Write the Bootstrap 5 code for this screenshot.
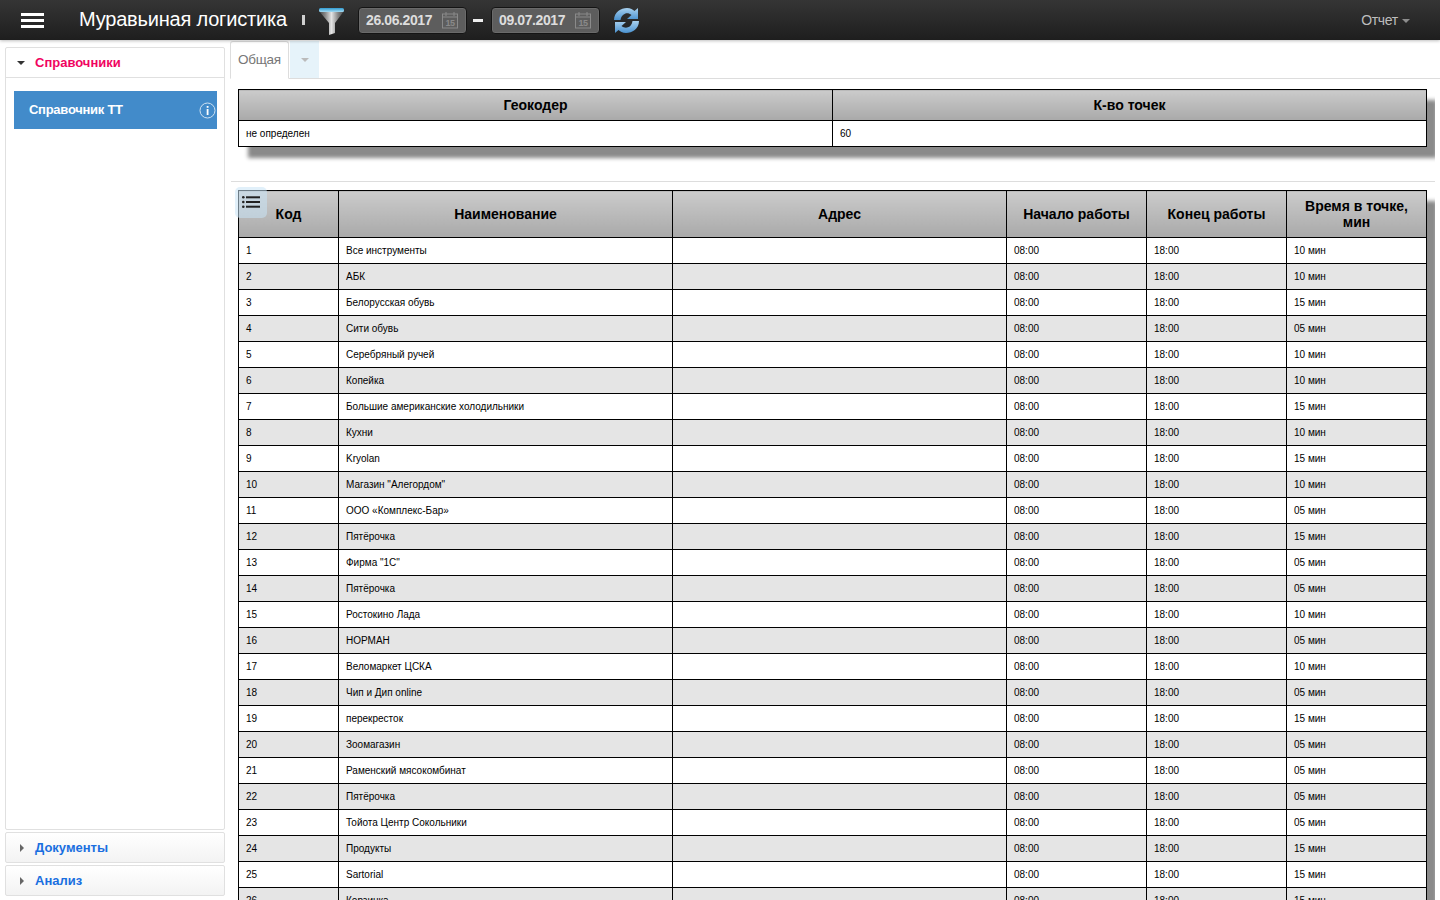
<!DOCTYPE html>
<html lang="ru">
<head>
<meta charset="utf-8">
<title>Муравьиная логистика</title>
<link rel="stylesheet" href="https://cdn.jsdelivr.net/npm/bootstrap@5.3.0/dist/css/bootstrap.min.css">
<style>
html,body{height:900px;overflow:hidden;margin:0}
body{font-family:"Liberation Sans",Arial,sans-serif;background:#fff;color:#000}
.topbar{height:40px;background:linear-gradient(#353535,#1e1e1e);color:#fff;box-shadow:0 1px 3px rgba(0,0,0,.25);position:relative;z-index:2}
.burger{width:23px;margin-left:21px;margin-right:35px;display:flex;flex-direction:column;gap:3px}
.burger i{display:block;height:3px;background:#fff}
.brand-name{font-size:20px;letter-spacing:-.2px;width:223px;white-space:nowrap;margin-top:-3px}
.tick{width:3px;height:10px;background:#d0d0d0;margin-right:13px}
.funnel{margin-right:13px;margin-top:1px}
.datebox{height:27px;width:109px;background:#5d5d5d;border:1px solid #141414;border-radius:4px;box-shadow:inset 0 0 0 1px #6a6a6a;color:#ddd;font-weight:700;font-size:14px;letter-spacing:-.4px;padding-left:7px}
.datebox svg{margin-left:auto;margin-right:6px}
.dash{width:10px;height:3px;background:#eee;margin:0 8px 0 6px}
.report{margin-left:auto;margin-right:30px;color:#bdbdbd;font-size:14px;letter-spacing:-.3px}
.caret-s{display:inline-block;border-left:4px solid transparent;border-right:4px solid transparent;border-top:4px solid #8d8d8d;vertical-align:middle;margin-left:4px}
.shell{height:860px}
.sidepane{width:230px;padding:7px 0 0 5px;flex:none}
.acc-box{width:220px;border:1px solid #e0e0e0;border-radius:2px;background:#fff}
.acc-head{height:30px;padding-left:11px;font-size:13px;font-weight:700;white-space:nowrap}
.acc-open{height:783px}
.acc-open .acc-head{border-bottom:1px solid #e0e0e0;color:#f0045f}
.acc-closed{height:31px;margin-top:2px;background:linear-gradient(#fff,#f3f3f3)}
.acc-closed .acc-head{color:#1a6fe0;height:29px}
.arrow-down{border-left:4px solid transparent;border-right:4px solid transparent;border-top:4px solid #333;margin-right:10px;margin-top:1px}
.arrow-right{border-top:4px solid transparent;border-bottom:4px solid transparent;border-left:4px solid #666;margin-left:3px;margin-right:11px;margin-top:1px}
.ref-item{margin:13px 7px 0 8px;height:38px;background:#428bca;color:#fff;font-size:13px;font-weight:700;letter-spacing:-.27px;padding-left:15px}
.ref-item svg{margin-left:auto;margin-right:1px}
.mainpane{flex:1;min-width:0;padding-top:1px}
.tabbar{height:38px;border-bottom:1px solid #ddd}
.tab-one{width:59px;height:38px;border:1px solid #ddd;border-bottom-color:#fff;border-radius:3px 3px 0 0;color:#777;font-size:13.5px;letter-spacing:-.25px;padding-left:7px;line-height:35px;background:#fff;margin-bottom:-1px}
.tab-more{width:29px;height:37px;background:#e6f3fa;margin-left:1px}
.tab-more span{border-left:4px solid transparent;border-right:4px solid transparent;border-top:4px solid #bbb;display:block}
.scroll-area{margin-right:5px;overflow:hidden;height:821px}
.grid-wrap{margin:10px 8px 0 8px;box-shadow:10px 11px 4px #8a8a8a}
.gridtab{width:100%;table-layout:fixed;border-collapse:collapse;margin:0;background:#fff}
.gridtab th,.gridtab td{border:1px solid #000;padding:0 7px;vertical-align:middle}
.gridtab th{background:linear-gradient(#cbcbcb,#a9a9a9);font-size:14px;font-weight:700;text-align:center;line-height:16px;color:#000}
.gridtab td{font-size:10px;height:26px;padding-top:1px;line-height:12px;white-space:nowrap;overflow:hidden}
.gridtab tbody tr:nth-child(even) td{background:#e5e5e5}
.geo th{height:31px}
.geo td{height:26px}
.rule{height:1px;background:#ddd;margin:34px 0 0 1px}
.list-wrap{margin-top:8px;position:relative}
.list-wrap .gridtab th{height:47px}
.list-toggle{position:absolute;left:-3px;top:-3px;width:32px;height:31px;background:rgba(200,228,245,.55);border-radius:5px;z-index:1;display:flex;justify-content:center;padding-top:9px}
</style>
</head>
<body>
<nav class="topbar d-flex align-items-center">
  <div class="burger"><i></i><i></i><i></i></div>
  <div class="brand-name">Муравьиная логистика</div>
  <div class="tick"></div>
  <svg class="funnel" width="27" height="28" viewBox="0 0 27 28"><defs><linearGradient id="f1" x1="0" x2="1" y1="0" y2="0"><stop offset="0" stop-color="#444"/><stop offset=".25" stop-color="#888"/><stop offset=".5" stop-color="#e4e4e4"/><stop offset=".75" stop-color="#888"/><stop offset="1" stop-color="#444"/></linearGradient><linearGradient id="f2" x1="0" x2="0" y1="0" y2="1"><stop offset="0" stop-color="#2f9bd2"/><stop offset="1" stop-color="#a8dcf2"/></linearGradient></defs><path d="M1 4h25L17 16v10l-6 2V16z" fill="url(#f1)"/><rect x="1" y="1" width="25" height="4" rx="1.5" fill="url(#f2)"/></svg>
  <div class="datebox d-flex align-items-center">26.06.2017<svg width="18" height="18" viewBox="0 0 18 18"><rect x=".5" y="3" width="15" height="14" fill="none" stroke="#8a8a8a"/><path d="M1 6h14" stroke="#8a8a8a"/><path d="M4 1v4M12 1v4" stroke="#8a8a8a"/><text x="8" y="15" font-size="9" text-anchor="middle" fill="#8a8a8a" font-family="Liberation Sans">15</text></svg></div>
  <div class="dash"></div>
  <div class="datebox d-flex align-items-center">09.07.2017<svg width="18" height="18" viewBox="0 0 18 18"><rect x=".5" y="3" width="15" height="14" fill="none" stroke="#8a8a8a"/><path d="M1 6h14" stroke="#8a8a8a"/><path d="M4 1v4M12 1v4" stroke="#8a8a8a"/><text x="8" y="15" font-size="9" text-anchor="middle" fill="#8a8a8a" font-family="Liberation Sans">15</text></svg></div>
  <svg width="27" height="27" viewBox="0 0 27 27" style="margin-left:13px"><defs><linearGradient id="r1" x1="0" x2="0" y1="0" y2="1"><stop offset="0" stop-color="#a8d0ee"/><stop offset="1" stop-color="#4a92d0"/></linearGradient></defs><path d="M1 13C1 5 8 1 14 1c3.5 0 6 1.500 7.500 3L25 1v11H14l4.500-4c-2-1.700-4.500-2-6.500-1.300-2.500.9-4 3-4.500 6.300z" fill="url(#r1)"/><path d="M26 14c0 8-7 12-13 12-3.500 0-6-1.500-7.500-3L2 26V15h11l-4.500 4c2 1.700 4.500 2 6.500 1.300 2.500-.9 4-3 4.500-6.300z" fill="url(#r1)"/></svg>
  <div class="report">Отчет<span class="caret-s"></span></div>
</nav>
<div class="shell d-flex">
  <aside class="sidepane">
    <div class="acc-box acc-open">
      <div class="acc-head d-flex align-items-center"><span class="arrow-down"></span>Справочники</div>
      <div class="ref-item d-flex align-items-center">Справочник ТТ<svg width="17" height="17" viewBox="0 0 17 17"><circle cx="8.5" cy="8.5" r="7.5" fill="none" stroke="#cfe2f2"/><rect x="7.7" y="7" width="1.8" height="6" fill="#fff"/><rect x="7.7" y="4" width="1.8" height="1.8" fill="#fff"/></svg></div>
    </div>
    <div class="acc-box acc-closed"><div class="acc-head d-flex align-items-center"><span class="arrow-right"></span>Документы</div></div>
    <div class="acc-box acc-closed"><div class="acc-head d-flex align-items-center"><span class="arrow-right"></span>Анализ</div></div>
  </aside>
  <main class="mainpane">
    <div class="tabbar d-flex">
      <div class="tab-one">Общая</div>
      <div class="tab-more d-flex align-items-center justify-content-center"><span></span></div>
    </div>
    <div class="scroll-area">
    <div class="grid-wrap">
      <table class="gridtab geo"><thead><tr><th>Геокодер</th><th>К-во точек</th></tr></thead><tbody><tr><td>не определен</td><td>60</td></tr></tbody></table>
    </div>
    <div class="rule"></div>
    <div class="grid-wrap list-wrap">
      <div class="list-toggle"><svg width="18" height="12" viewBox="0 0 18 12"><g fill="#222"><circle cx="1.3" cy="1.3" r="1.3"/><circle cx="1.3" cy="6" r="1.3"/><circle cx="1.3" cy="10.7" r="1.3"/><rect x="4" y=".3" width="14" height="2"/><rect x="4" y="5" width="14" height="2"/><rect x="4" y="9.7" width="14" height="2"/></g></svg></div>
      <table class="gridtab">
        <colgroup><col style="width:100px"><col style="width:334px"><col style="width:334px"><col style="width:140px"><col style="width:140px"><col></colgroup>
        <thead><tr><th>Код</th><th>Наименование</th><th>Адрес</th><th>Начало работы</th><th>Конец работы</th><th>Время в точке, мин</th></tr></thead>
        <tbody id="rows">
<tr><td>1</td><td>Все инструменты</td><td></td><td>08:00</td><td>18:00</td><td>10 мин</td></tr>
<tr><td>2</td><td>АБК</td><td></td><td>08:00</td><td>18:00</td><td>10 мин</td></tr>
<tr><td>3</td><td>Белорусская обувь</td><td></td><td>08:00</td><td>18:00</td><td>15 мин</td></tr>
<tr><td>4</td><td>Сити обувь</td><td></td><td>08:00</td><td>18:00</td><td>05 мин</td></tr>
<tr><td>5</td><td>Серебряный ручей</td><td></td><td>08:00</td><td>18:00</td><td>10 мин</td></tr>
<tr><td>6</td><td>Копейка</td><td></td><td>08:00</td><td>18:00</td><td>10 мин</td></tr>
<tr><td>7</td><td>Большие американские холодильники</td><td></td><td>08:00</td><td>18:00</td><td>15 мин</td></tr>
<tr><td>8</td><td>Кухни</td><td></td><td>08:00</td><td>18:00</td><td>10 мин</td></tr>
<tr><td>9</td><td>Kryolan</td><td></td><td>08:00</td><td>18:00</td><td>15 мин</td></tr>
<tr><td>10</td><td>Магазин "Алегордом"</td><td></td><td>08:00</td><td>18:00</td><td>10 мин</td></tr>
<tr><td>11</td><td>ООО «Комплекс-Бар»</td><td></td><td>08:00</td><td>18:00</td><td>05 мин</td></tr>
<tr><td>12</td><td>Пятёрочка</td><td></td><td>08:00</td><td>18:00</td><td>15 мин</td></tr>
<tr><td>13</td><td>Фирма "1С"</td><td></td><td>08:00</td><td>18:00</td><td>05 мин</td></tr>
<tr><td>14</td><td>Пятёрочка</td><td></td><td>08:00</td><td>18:00</td><td>05 мин</td></tr>
<tr><td>15</td><td>Ростокино Лада</td><td></td><td>08:00</td><td>18:00</td><td>10 мин</td></tr>
<tr><td>16</td><td>НОРМАН</td><td></td><td>08:00</td><td>18:00</td><td>05 мин</td></tr>
<tr><td>17</td><td>Веломаркет ЦСКА</td><td></td><td>08:00</td><td>18:00</td><td>10 мин</td></tr>
<tr><td>18</td><td>Чип и Дип online</td><td></td><td>08:00</td><td>18:00</td><td>05 мин</td></tr>
<tr><td>19</td><td>перекресток</td><td></td><td>08:00</td><td>18:00</td><td>15 мин</td></tr>
<tr><td>20</td><td>Зоомагазин</td><td></td><td>08:00</td><td>18:00</td><td>05 мин</td></tr>
<tr><td>21</td><td>Раменский мясокомбинат</td><td></td><td>08:00</td><td>18:00</td><td>05 мин</td></tr>
<tr><td>22</td><td>Пятёрочка</td><td></td><td>08:00</td><td>18:00</td><td>05 мин</td></tr>
<tr><td>23</td><td>Тойота Центр Сокольники</td><td></td><td>08:00</td><td>18:00</td><td>05 мин</td></tr>
<tr><td>24</td><td>Продукты</td><td></td><td>08:00</td><td>18:00</td><td>15 мин</td></tr>
<tr><td>25</td><td>Sartorial</td><td></td><td>08:00</td><td>18:00</td><td>15 мин</td></tr>
<tr><td>26</td><td>Корзинка</td><td></td><td>08:00</td><td>18:00</td><td>15 мин</td></tr>
        </tbody>
      </table>
    </div>
    </div>
  </main>
</div>
<script src="https://cdn.jsdelivr.net/npm/bootstrap@5.3.0/dist/js/bootstrap.bundle.min.js"></script>
</body>
</html>
